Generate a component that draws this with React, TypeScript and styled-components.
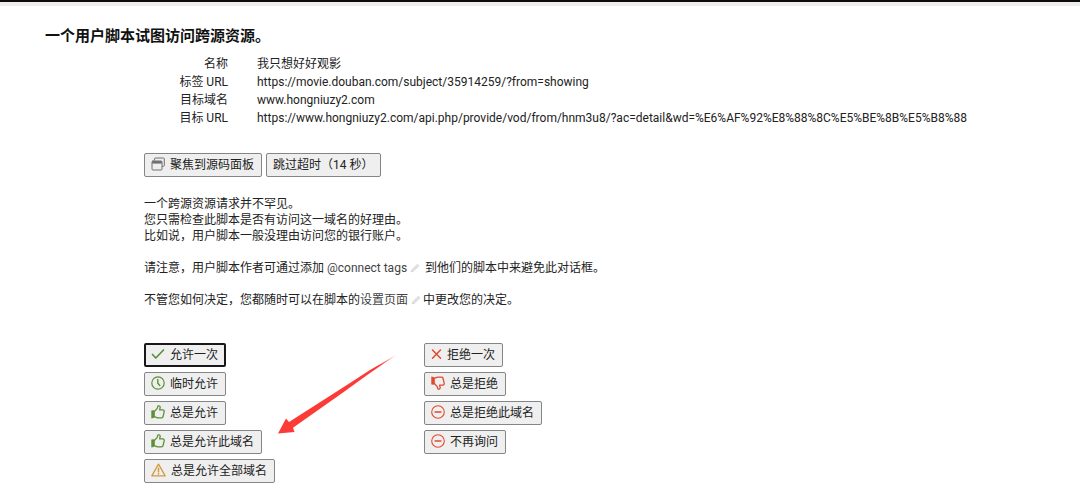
import React from 'react';
import styled, { createGlobalStyle } from 'styled-components';

const GlobalStyle = createGlobalStyle`
  * { box-sizing: border-box; }
  body {
    margin: 0;
    background: #fff;
    color: #222;
    font-family: Roboto, "Noto Sans CJK SC", sans-serif;
    font-size: 12px;
    line-height: 16px;
  }
`;

const TopBar = styled.div`
  height: 6px;
  background: #eeecec;
  border-top: 2px solid #0c0a0a;
`;

const Page = styled.main`
  position: relative;
  padding: 18px 45px 12px;
`;

const Title = styled.h1`
  margin: 0;
  color: #111;
  font-size: 15px;
  line-height: 24px;
  font-weight: 700;
`;

const Details = styled.table`
  margin-top: 7px;
  border-collapse: collapse;
  line-height: 18px;
`;

const Label = styled.th`
  width: 183px;
  padding: 0;
  font-weight: 400;
  text-align: right;
`;

const Value = styled.td`
  padding: 0 0 0 29px;
  white-space: nowrap;
`;

const Body = styled.div`
  padding-left: 99px;
`;

const Toolbar = styled.div`
  display: flex;
  gap: 4px;
  margin-top: 26px;
`;

const Button = styled.button<{ $primary?: boolean }>`
  display: inline-flex;
  align-items: center;
  gap: 5px;
  height: 24px;
  padding: ${p => (p.$primary ? '0 6px 0 5px' : '0 7px 0 6px')};
  border: ${p => (p.$primary ? '2px solid #1a1718' : '1px solid #858585')};
  border-radius: 2px;
  background: #efefef;
  color: #222;
  font: inherit;
  white-space: nowrap;
`;

const Text = styled.div`
  margin-top: 19px;
`;

const Paragraph = styled.p`
  margin: 0 0 16px;
`;

const Link = styled.a`
  color: #444;
  text-decoration: none;
`;

const Choices = styled.div`
  display: grid;
  grid-template-columns: 280px 1fr;
  margin-top: 35px;
`;

const Column = styled.div`
  display: flex;
  flex-direction: column;
  align-items: flex-start;
  gap: 5px;
`;

const Glyph = styled.svg`
  display: block;
  flex: none;
  margin-bottom: 2px;
  fill: none;
  stroke: currentColor;
  stroke-linecap: round;
  stroke-linejoin: round;
`;

const Pencil = styled.svg`
  margin: 0 2px 0 3px;
  vertical-align: -1px;
`;

const Arrow = styled.svg`
  position: absolute;
  left: 278px;
  top: 348px;
`;

const green = '#5b9138';
const red = '#e2492f';

const LinkMark = () => (
  <Pencil width="10" height="10" viewBox="0 0 10 10" aria-hidden="true">
    <path d="M1 9 2 6.6 7.3 1.3 8.9 2.9 3.4 8.2Z" fill="#e4e4e4" stroke="#c8c8c8" strokeWidth="0.6" />
  </Pencil>
);

const WindowIcon = () => (
  <Glyph width="14" height="14" viewBox="0 0 14 14" color="#707070">
    <path d="M3.6 3V1.5Q3.6 1 4.1 1H12.5Q13.3 1 13.3 1.8V8.5Q13.3 9.3 12.4 9.3H11.5" />
    <rect x="1" y="4" width="10" height="9" rx="1" />
    <path d="M1.2 5.3H10.8" strokeWidth="2.6" strokeLinecap="butt" />
  </Glyph>
);

const CheckIcon = () => (
  <Glyph width="14" height="14" viewBox="0 0 14 14" color={green}>
    <path d="M1.5 7.5 4.8 11 12.5 3" strokeWidth="1.7" />
  </Glyph>
);

const ClockIcon = () => (
  <Glyph width="14" height="14" viewBox="0 0 14 14" color={green}>
    <circle cx="7" cy="7" r="6.2" strokeWidth="1.2" />
    <path d="M6.8 3.5V7.3L8.8 9.5" strokeWidth="1.4" />
  </Glyph>
);

const Thumb = ({ down }: { down?: boolean }) => (
  <Glyph width="14" height="14" viewBox="0 0 14 14" color={down ? red : green}>
    <g transform={down ? 'matrix(1 0 0 -1 0 14)' : undefined}>
      <path d="M1 5.8H3.4V12.2L1 13Z" fill="currentColor" strokeWidth="0.8" />
      <path d="M3.8 6.2 6.2 3.4 7 .9Q9 .5 9.2 2.4L8.6 4.9H12.2Q13.4 5.2 13.2 6.6L12 11.8Q11.7 12.8 10.6 12.8H6.6L3.8 11.8" strokeWidth="1.3" />
    </g>
  </Glyph>
);

const WarningIcon = () => (
  <Glyph width="15" height="14" viewBox="0 0 15 14" color="#d39a3c">
    <path d="M7.5 1.2 14.2 12.8H.8Z" strokeWidth="1.3" />
    <path d="M7.5 5.2V8.8M7.5 10.6V11" strokeWidth="1.5" />
  </Glyph>
);

const CrossIcon = () => (
  <Glyph width="11" height="14" viewBox="0 0 11 14" color={red}>
    <path d="M1.5 3 9.5 11.2M9.5 3 1.5 11.2" strokeWidth="1.5" />
  </Glyph>
);

const MinusIcon = () => (
  <Glyph width="14" height="14" viewBox="0 0 14 14" color={red}>
    <circle cx="7" cy="7" r="6.3" strokeWidth="1.1" />
    <path d="M4 7H10" strokeWidth="1.4" />
  </Glyph>
);

const details = [
  { label: '名称', value: '我只想好好观影' },
  { label: '标签 URL', value: 'https://movie.douban.com/subject/35914259/?from=showing' },
  { label: '目标域名', value: 'www.hongniuzy2.com' },
  {
    label: '目标 URL',
    value:
      'https://www.hongniuzy2.com/api.php/provide/vod/from/hnm3u8/?ac=detail&wd=%E6%AF%92%E8%88%8C%E5%BE%8B%E5%B8%88',
  },
];

export default function App() {
  return (
    <>
      <GlobalStyle />
      <TopBar />
      <Page>
        <Title>一个用户脚本试图访问跨源资源。</Title>
        <Details>
          <tbody>
            {details.map(d => (
              <tr key={d.label}>
                <Label scope="row">{d.label}</Label>
                <Value>{d.value}</Value>
              </tr>
            ))}
          </tbody>
        </Details>
        <Body>
          <Toolbar>
            <Button type="button"><WindowIcon />聚焦到源码面板</Button>
            <Button type="button">跳过超时（14 秒）</Button>
          </Toolbar>
          <Text>
            <Paragraph>
              一个跨源资源请求并不罕见。<br />
              您只需检查此脚本是否有访问这一域名的好理由。<br />
              比如说，用户脚本一般没理由访问您的银行账户。
            </Paragraph>
            <Paragraph>
              请注意，用户脚本作者可通过添加 <Link href="#connect">@connect tags<LinkMark /></Link> 到他们的脚本中来避免此对话框。
            </Paragraph>
            <Paragraph>
              不管您如何决定，您都随时可以在脚本的<Link href="#settings">设置页面<LinkMark /></Link>中更改您的决定。
            </Paragraph>
          </Text>
          <Choices>
            <Column>
              <Button type="button" $primary><CheckIcon />允许一次</Button>
              <Button type="button"><ClockIcon />临时允许</Button>
              <Button type="button"><Thumb />总是允许</Button>
              <Button type="button"><Thumb />总是允许此域名</Button>
              <Button type="button"><WarningIcon />总是允许全部域名</Button>
            </Column>
            <Column>
              <Button type="button"><CrossIcon />拒绝一次</Button>
              <Button type="button"><Thumb down />总是拒绝</Button>
              <Button type="button"><MinusIcon />总是拒绝此域名</Button>
              <Button type="button"><MinusIcon />不再询问</Button>
            </Column>
          </Choices>
        </Body>
        <Arrow width="120" height="80" viewBox="0 0 120 80" aria-hidden="true">
          <defs>
            <linearGradient id="fade" x1="0" y1="1" x2="1" y2="0">
              <stop offset="0.85" stopColor="#fc3a36" />
              <stop offset="1" stopColor="#fc3a36" stopOpacity="0.3" />
            </linearGradient>
          </defs>
          <path d="M0 79.5 8 64.5 11 68 65 33.5 92 16 119 .5 92 19 65 38.5 15 73.8 16.500 78Z" fill="url(#fade)" />
        </Arrow>
      </Page>
    </>
  );
}
